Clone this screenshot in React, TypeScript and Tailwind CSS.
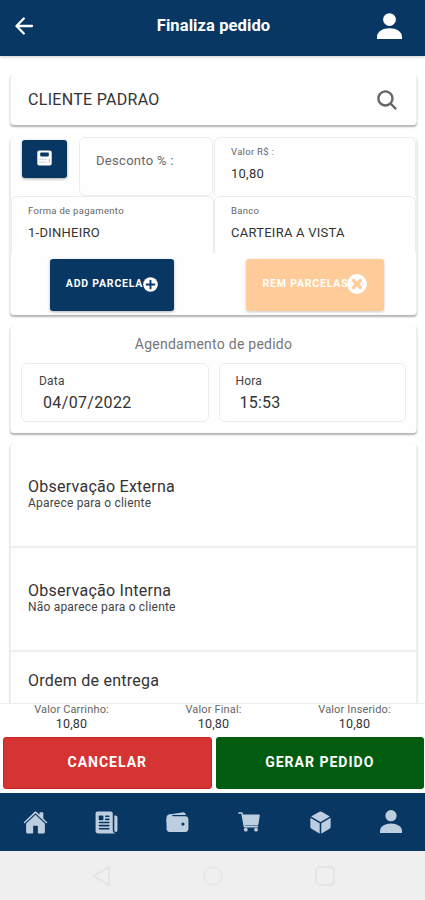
import type { ReactNode } from 'react';
import { IoCube, IoHome, IoNewspaper, IoSearch, IoWallet } from 'react-icons/io5';

const totals = [
  { label: 'Valor Carrinho:', value: '10,80' },
  { label: 'Valor Final:', value: '10,80' },
  { label: 'Valor Inserido:', value: '10,80' },
];

const notes = [
  { title: 'Observação Externa', hint: 'Aparece para o cliente' },
  { title: 'Observação Interna', hint: 'Não aparece para o cliente' },
];

const tabs = [
  { id: 'home', icon: <IoHome size={25} /> },
  { id: 'news', icon: <IoNewspaper size={25} /> },
  { id: 'wallet', icon: <IoWallet size={25} /> },
  { id: 'cart', icon: <CartIcon /> },
  { id: 'cube', icon: <IoCube size={25} /> },
  { id: 'profile', icon: <PersonIcon size={22} /> },
];

function ArrowBackIcon() {
  return (
    <svg width="19" height="18" viewBox="0 0 19 18" fill="none" stroke="currentColor" strokeWidth="2.3" strokeLinecap="round" strokeLinejoin="round">
      <path d="M8.8 1.5L1.5 9l7.3 7.5M2 9h15" />
    </svg>
  );
}

function PersonIcon({ size }: { size: number }) {
  return (
    <svg width={size} height={size * 1.05} viewBox="0 0 25 26.2" fill="currentColor">
      <circle cx="12.5" cy="6.5" r="6.4" />
      <path d="M0 26v-2.4C0 18.4 6 15.2 12.5 15.2S25 18.4 25 23.6V26z" />
    </svg>
  );
}

function CartIcon() {
  return (
    <svg width="22" height="20" viewBox="0 0 22 20" fill="currentColor">
      <path d="M0.8 1h3.1l2.6 13.8h13" fill="none" stroke="currentColor" strokeWidth="1.5" strokeLinecap="round" strokeLinejoin="round" />
      <path d="M4.3 2.6H21a.8.8 0 0 1 .8 1l-1.4 9a1.3 1.3 0 0 1-1.2 1H6z" />
      <circle cx="7.8" cy="17.7" r="1.9" />
      <circle cx="18" cy="17.7" r="1.9" />
    </svg>
  );
}

function CalculatorIcon() {
  return (
    <svg width="15" height="16" viewBox="0 0 15 16">
      <rect x="0.3" y="0.5" width="14.4" height="15" rx="2" fill="#fff" />
      <rect x="3.2" y="2.4" width="8.6" height="4" rx="0.8" fill="#083764" />
      <path d="M2.3 9.2h8M2.3 12.2h8" stroke="#b4c1d0" strokeWidth="0.9" strokeDasharray="2 0.6" />
      <path d="M12.3 8.6v4" stroke="#b4c1d0" strokeWidth="1" />
    </svg>
  );
}

function Card({ className, children }: { className: string; children: ReactNode }) {
  return (
    <div className={`rounded-[4px] border-x border-[#f0f0f0] bg-[#fefefe] shadow-[0_2px_2px_rgba(0,0,0,0.3)] ${className}`}>
      {children}
    </div>
  );
}

function Field({ label, value }: { label: string; value: string }) {
  return (
    <div className="rounded-t-[6px] border border-b-0 border-[#ececec] pl-4">
      <p className="pt-2 text-[9.5px] leading-[11px] tracking-[0.3px] text-[#666]">{label}</p>
      <p className="pt-[9px] text-[13px] leading-4 tracking-[0.25px] text-[#333]">{value}</p>
    </div>
  );
}

export default function App() {
  return (
    <div className="flex h-[900px] w-[425px] flex-col overflow-hidden bg-white font-['Roboto',sans-serif]">
      {/* Header */}
      <header className="z-10 grid h-14 shrink-0 grid-cols-[1fr_auto_1fr] items-center bg-[#083764] pr-[23px] pb-1 pl-[25px] text-white shadow-[0_1px_3px_rgba(0,0,0,0.2)]">
        <button className="-ml-[10px] justify-self-start"><ArrowBackIcon /></button>
        <h1 className="text-[16.5px] font-bold tracking-[0.1px]">Finaliza pedido</h1>
        <button className="justify-self-end"><PersonIcon size={25} /></button>
      </header>

      {/* Content */}
      <main className="flex min-h-0 flex-1 flex-col overflow-hidden pt-[18px] pr-2 pl-[10px]">
        <Card className="flex h-[51px] shrink-0 items-center justify-between pr-[17px] pl-[17px]">
          <span className="text-base tracking-[0.3px] text-[#333]">CLIENTE PADRAO</span>
          <IoSearch size={24} className="text-[#666]" />
        </Card>

        {/* Payment */}
        <Card className="mt-3 h-[178px] shrink-0">
          <div className="grid h-[59px] grid-cols-[68px_135px_1fr]">
            <button className="mt-[3px] ml-[11px] flex h-[38px] w-[45px] items-center justify-center rounded-[3px] bg-[#083764] pb-[2px] shadow-[0_1px_3px_rgba(0,0,0,0.35)]">
              <CalculatorIcon />
            </button>
            <div className="mr-px rounded-[6px] border border-[#ececec] pt-[13px] pl-4 text-[13px] tracking-[0.3px] text-[#666]">
              Desconto % :
            </div>
            <Field label="Valor R$ :" value="10,80" />
          </div>
          <div className="grid h-[57px] grid-cols-[203px_1fr]">
            <Field label="Forma de pagamento" value="1-DINHEIRO" />
            <Field label="Banco" value="CARTEIRA A VISTA" />
          </div>
          <div className="mt-[6px] flex justify-between pr-[32px] pl-[39px] text-[10.5px] font-bold tracking-[0.8px] text-white">
            <button className="flex h-[52px] w-[124px] items-center justify-center rounded-[3px] bg-[#083764] pb-[2px] shadow-[0_1px_3px_rgba(0,0,0,0.3)]">
              ADD PARCELA
              <svg width="15" height="15" viewBox="0 0 15 15" className="shrink-0">
                <circle cx="7.5" cy="7.5" r="7.3" fill="#fff" />
                <path d="M7.5 3.6v7.8M3.6 7.5h7.8" stroke="#083764" strokeWidth="1.9" strokeLinecap="round" />
              </svg>
            </button>
            <button className="flex h-[52px] w-[138px] items-center justify-center rounded-[3px] bg-[#ffcc99] pb-[2px] shadow-[0_1px_3px_rgba(0,0,0,0.2)]">
              REM PARCELAS
              <svg width="20" height="20" viewBox="0 0 20 20" className="-ml-px shrink-0">
                <circle cx="10" cy="10" r="9.9" fill="#fff" />
                <path d="M6.5 6.5l7 7M13.5 6.5l-7 7" stroke="#ffcc99" strokeWidth="3.2" strokeLinecap="round" />
              </svg>
            </button>
          </div>
        </Card>

        {/* Schedule */}
        <Card className="mt-[10px] h-[108px] shrink-0 px-[10px]">
          <h2 className="pt-[9px] text-center text-sm tracking-[0.25px] text-[#777]">Agendamento de pedido</h2>
          <div className="mt-[9px] grid grid-cols-2 gap-[10px]">
            <div className="h-[59px] rounded-[6px] border border-[#ececec] pt-[10px] pl-[17px]">
              <p className="text-xs leading-[14px] tracking-[0.2px] text-[#444]">Data</p>
              <p className="pt-[5px] pl-1 text-base leading-5 tracking-[0.35px] text-[#333]">04/07/2022</p>
            </div>
            <div className="h-[59px] rounded-[6px] border border-[#ececec] pt-[10px] pl-4">
              <p className="text-xs leading-[14px] tracking-[0.2px] text-[#444]">Hora</p>
              <p className="pt-[5px] pl-1 text-base leading-5 tracking-[0.2px] text-[#333]">15:53</p>
            </div>
          </div>
        </Card>

        {/* Notes */}
        <Card className="mt-[10px] h-[300px] shrink-0">
          {notes.map((note) => (
            <div key={note.title} className="h-[104px] border-b-2 border-[#eee] pt-[33px] pl-[17px] first:h-[105px] first:pt-[34px]">
              <h3 className="text-base leading-5 tracking-[0.25px] text-[#333]">{note.title}</h3>
              <p className="text-xs leading-[13px] tracking-[0.2px] text-[#444]">{note.hint}</p>
            </div>
          ))}
          <h3 className="pt-[19px] pl-[17px] text-base leading-5 tracking-[0.25px] text-[#333]">Ordem de entrega</h3>
        </Card>
      </main>

      {/* Totals and actions */}
      <footer className="shrink-0 border-t border-[#eee] bg-white">
        <div className="grid h-[33px] grid-cols-[143px_141px_141px] text-center">
          {totals.map((total) => (
            <div key={total.label} className="-mt-px">
              <p className="text-[11px] leading-[14px] tracking-[0.15px] text-[#666]">{total.label}</p>
              <p className="text-[12.5px] leading-[14px] tracking-[0.2px] text-[#333]">{total.value}</p>
            </div>
          ))}
        </div>
        <div className="grid h-14 grid-cols-2 gap-1 pr-px pl-[3px] text-sm font-bold tracking-[1px] text-white">
          <button className="h-[52px] rounded-[3px] border border-[#cf1f1f] bg-[#d63333] pb-[2px]">CANCELAR</button>
          <button className="h-[52px] rounded-[3px] bg-[#025c10] pb-[2px]">GERAR PEDIDO</button>
        </div>
      </footer>

      {/* Tab bar */}
      <nav className="h-[58px] shrink-0 bg-[#083764] text-[#bdcee0]">
        <div className="-mr-0.5 grid h-full grid-cols-6 place-items-center">
          {tabs.map((tab) => (
            <button key={tab.id}>{tab.icon}</button>
          ))}
        </div>
      </nav>

      {/* Android navigation */}
      <div className="flex h-[49px] shrink-0 items-center justify-center gap-[92px] bg-[#efefef]">
        <svg width="20" height="22" viewBox="0 0 20 22" fill="none" stroke="#e4e4e4" strokeWidth="2">
          <path d="M18 2v18L2.5 11z" strokeLinejoin="round" />
        </svg>
        <span className="h-5 w-5 rounded-full border-2 border-[#e7e7e7]" />
        <span className="h-5 w-5 rounded-[5px] border-2 border-[#e4e4e4]" />
      </div>
    </div>
  );
}
